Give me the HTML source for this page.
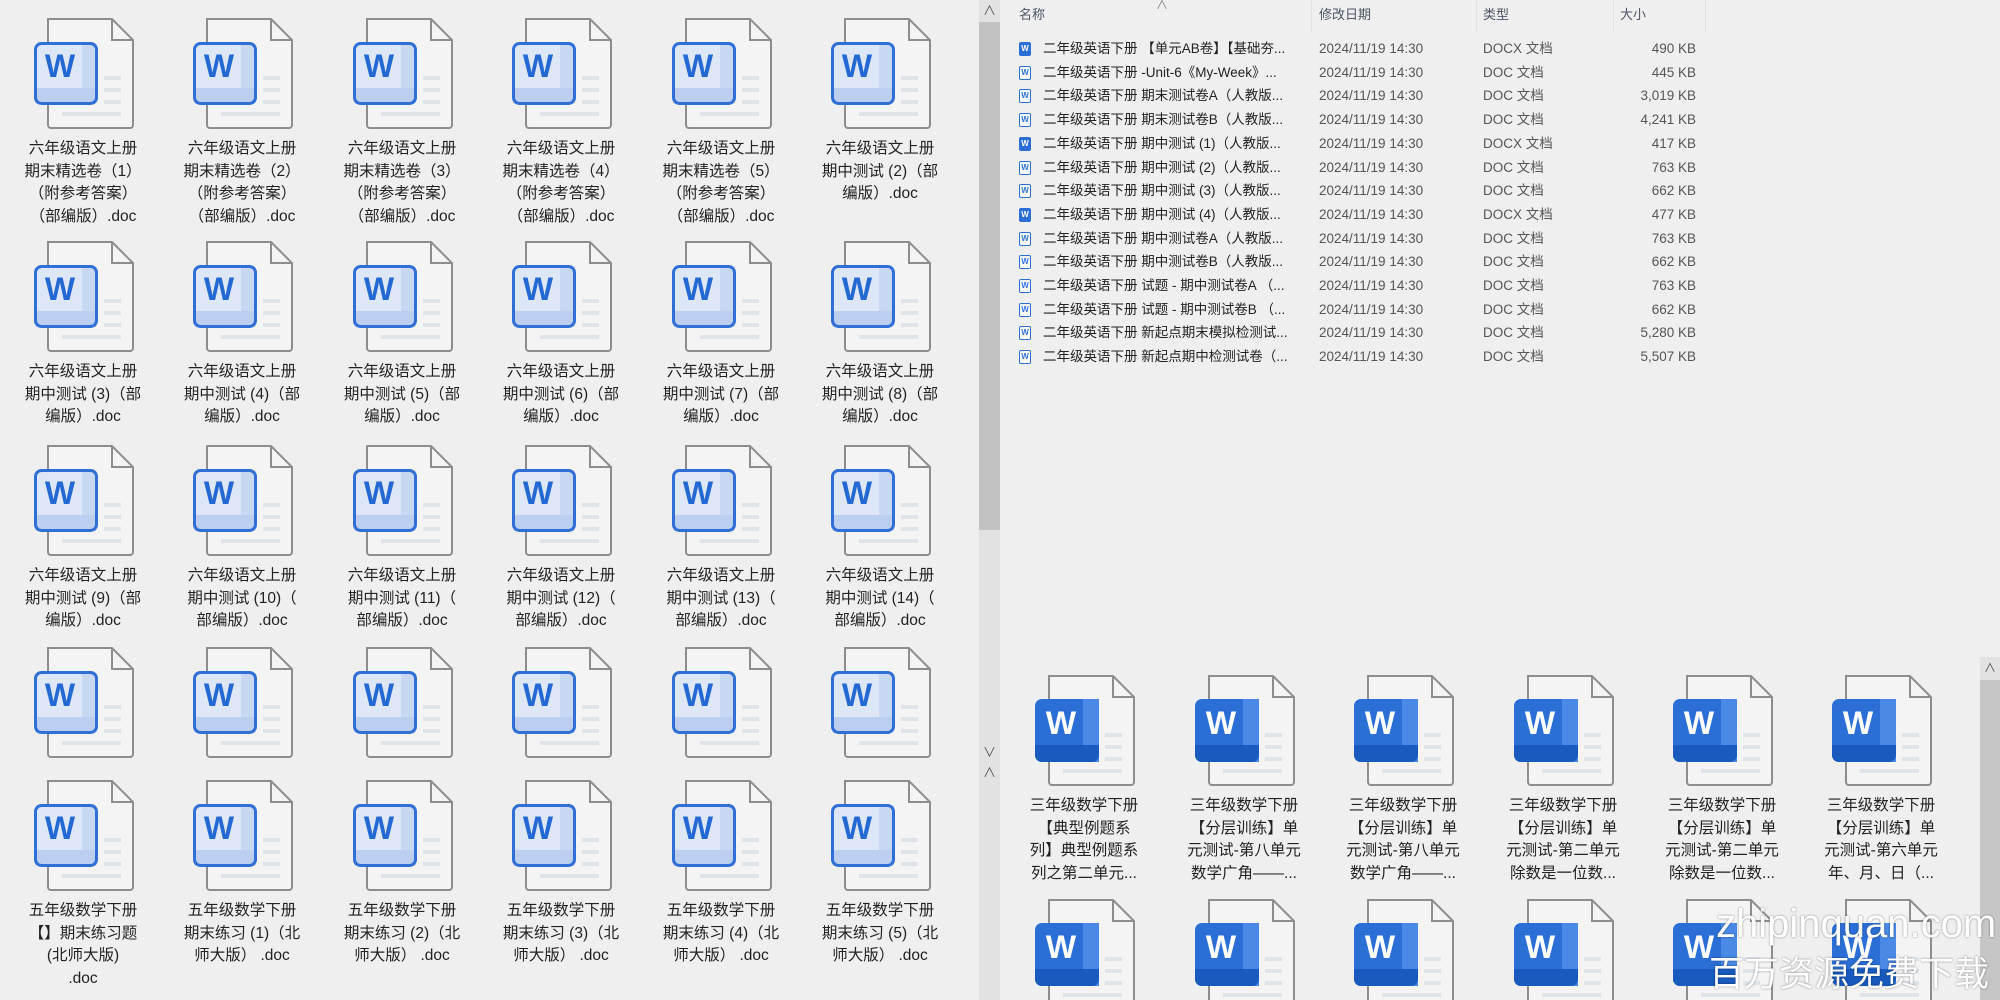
<!DOCTYPE html>
<html style="width:2000px;height:1000px;overflow:hidden"><head><meta charset="utf-8">
<style>
*{margin:0;padding:0;box-sizing:border-box}
body{width:2000px;height:1000px;overflow:hidden;background:#efefef;position:relative;font-family:"Liberation Sans","Noto Sans CJK SC",sans-serif;color:#1e1e1e}
.it{position:absolute;width:160px;height:100px}
.ic{position:absolute;left:31px;top:0;width:100px;height:112px}
.ic svg{position:absolute;left:0;top:0}
.ic b{position:absolute;left:0;top:30px;width:52px;height:40px;line-height:40px;text-align:center;font:bold 32px "Liberation Sans",sans-serif;color:#2469d3}
.dk b{color:#fff}
.tx{position:absolute;left:-10px;width:180px;top:120px;text-align:center;font-size:15.5px;line-height:22.5px;white-space:nowrap;color:#222}
.clip{height:112px;overflow:hidden}
.clipb{height:101px;overflow:hidden}
.row{position:absolute;left:1000px;height:24px;font-size:13.5px;line-height:24px;white-space:nowrap;color:#222}
.row span{position:absolute}
.g{color:#555}
.hd{position:absolute;top:4px;font-size:13px;color:#4d5566}
.sep{position:absolute;top:0;width:1px;height:32px;background:#e2e2e2}
.li{position:absolute;left:19px;top:5px;width:12px;height:14px;border:1.5px solid #2b6fd6;border-radius:2px;background:#fff;font:bold 8px "Liberation Sans",sans-serif;color:#2b6fd6;text-align:center;line-height:11px}
.li.f{background:#2b6fd6;color:#fff}
</style></head><body>
<svg width="0" height="0" style="position:absolute">
<defs>
<g id="pg"><path d="M14 1H78L99 22V107a3 3 0 0 1-3 3H17a3 3 0 0 1-3-3Z" fill="#f4f4f4" stroke="#8d8d8d" stroke-width="2"/><path d="M78 1V22H99" fill="none" stroke="#8d8d8d" stroke-width="2"/><rect x="70" y="58" width="17" height="4" fill="#dfe4eb"/><rect x="70" y="70" width="17" height="4" fill="#dfe4eb"/><rect x="70" y="82" width="17" height="4" fill="#dfe4eb"/><rect x="28" y="94" width="59" height="4" fill="#dfe4eb"/></g>
<g id="lt"><use href="#pg"/><rect x="1.5" y="25.5" width="61" height="60" rx="6" fill="#dde7f7"/><rect x="48" y="25.5" width="14.5" height="60" fill="#c8d8f2"/><rect x="1.5" y="70" width="61" height="15.5" fill="#bccff0"/><rect x="1.5" y="25.5" width="61" height="60" rx="6" fill="none" stroke="#2f6fd6" stroke-width="3"/></g>
<g id="dkk"><use href="#pg"/><rect x="0" y="24" width="64" height="63" rx="7" fill="#2b6fd6"/><rect x="48" y="24" width="16" height="63" rx="0" fill="#4a8ae6"/><rect x="0" y="70" width="64" height="17" rx="7" fill="#185abd"/><rect x="0" y="70" width="64" height="6" fill="#185abd"/></g>
</defs></svg>

<div style="position:absolute;left:979px;top:0;width:21px;height:1000px;background:#e2e2e2"></div>
<div style="position:absolute;left:979px;top:22px;width:21px;height:508px;background:#c2c2c2"></div>
<div style="position:absolute;left:983px;top:0;font-size:13px;color:#555">&#x2227;</div>
<div style="position:absolute;left:983px;top:742px;font-size:13px;color:#555">&#x2228;</div>
<div style="position:absolute;left:983px;top:762px;font-size:13px;color:#555">&#x2227;</div>

<div class="it" style="left:3px;top:18px"><div class="ic"><svg width="100" height="112"><use href="#lt"/></svg><b>W</b></div><div class="tx">六年级语文上册<br>期末精选卷（1）<br>（附参考答案）<br>（部编版）.doc</div></div>
<div class="it" style="left:162px;top:18px"><div class="ic"><svg width="100" height="112"><use href="#lt"/></svg><b>W</b></div><div class="tx">六年级语文上册<br>期末精选卷（2）<br>（附参考答案）<br>（部编版）.doc</div></div>
<div class="it" style="left:322px;top:18px"><div class="ic"><svg width="100" height="112"><use href="#lt"/></svg><b>W</b></div><div class="tx">六年级语文上册<br>期末精选卷（3）<br>（附参考答案）<br>（部编版）.doc</div></div>
<div class="it" style="left:481px;top:18px"><div class="ic"><svg width="100" height="112"><use href="#lt"/></svg><b>W</b></div><div class="tx">六年级语文上册<br>期末精选卷（4）<br>（附参考答案）<br>（部编版）.doc</div></div>
<div class="it" style="left:641px;top:18px"><div class="ic"><svg width="100" height="112"><use href="#lt"/></svg><b>W</b></div><div class="tx">六年级语文上册<br>期末精选卷（5）<br>（附参考答案）<br>（部编版）.doc</div></div>
<div class="it" style="left:800px;top:18px"><div class="ic"><svg width="100" height="112"><use href="#lt"/></svg><b>W</b></div><div class="tx">六年级语文上册<br>期中测试 (2)（部<br>编版）.doc</div></div>
<div class="it" style="left:3px;top:241px"><div class="ic"><svg width="100" height="112"><use href="#lt"/></svg><b>W</b></div><div class="tx">六年级语文上册<br>期中测试 (3)（部<br>编版）.doc</div></div>
<div class="it" style="left:162px;top:241px"><div class="ic"><svg width="100" height="112"><use href="#lt"/></svg><b>W</b></div><div class="tx">六年级语文上册<br>期中测试 (4)（部<br>编版）.doc</div></div>
<div class="it" style="left:322px;top:241px"><div class="ic"><svg width="100" height="112"><use href="#lt"/></svg><b>W</b></div><div class="tx">六年级语文上册<br>期中测试 (5)（部<br>编版）.doc</div></div>
<div class="it" style="left:481px;top:241px"><div class="ic"><svg width="100" height="112"><use href="#lt"/></svg><b>W</b></div><div class="tx">六年级语文上册<br>期中测试 (6)（部<br>编版）.doc</div></div>
<div class="it" style="left:641px;top:241px"><div class="ic"><svg width="100" height="112"><use href="#lt"/></svg><b>W</b></div><div class="tx">六年级语文上册<br>期中测试 (7)（部<br>编版）.doc</div></div>
<div class="it" style="left:800px;top:241px"><div class="ic"><svg width="100" height="112"><use href="#lt"/></svg><b>W</b></div><div class="tx">六年级语文上册<br>期中测试 (8)（部<br>编版）.doc</div></div>
<div class="it" style="left:3px;top:445px"><div class="ic"><svg width="100" height="112"><use href="#lt"/></svg><b>W</b></div><div class="tx">六年级语文上册<br>期中测试 (9)（部<br>编版）.doc</div></div>
<div class="it" style="left:162px;top:445px"><div class="ic"><svg width="100" height="112"><use href="#lt"/></svg><b>W</b></div><div class="tx">六年级语文上册<br>期中测试 (10)（<br>部编版）.doc</div></div>
<div class="it" style="left:322px;top:445px"><div class="ic"><svg width="100" height="112"><use href="#lt"/></svg><b>W</b></div><div class="tx">六年级语文上册<br>期中测试 (11)（<br>部编版）.doc</div></div>
<div class="it" style="left:481px;top:445px"><div class="ic"><svg width="100" height="112"><use href="#lt"/></svg><b>W</b></div><div class="tx">六年级语文上册<br>期中测试 (12)（<br>部编版）.doc</div></div>
<div class="it" style="left:641px;top:445px"><div class="ic"><svg width="100" height="112"><use href="#lt"/></svg><b>W</b></div><div class="tx">六年级语文上册<br>期中测试 (13)（<br>部编版）.doc</div></div>
<div class="it" style="left:800px;top:445px"><div class="ic"><svg width="100" height="112"><use href="#lt"/></svg><b>W</b></div><div class="tx">六年级语文上册<br>期中测试 (14)（<br>部编版）.doc</div></div>
<div class="it clip" style="left:3px;top:647px"><div class="ic"><svg width="100" height="112"><use href="#lt"/></svg><b>W</b></div></div>
<div class="it clip" style="left:162px;top:647px"><div class="ic"><svg width="100" height="112"><use href="#lt"/></svg><b>W</b></div></div>
<div class="it clip" style="left:322px;top:647px"><div class="ic"><svg width="100" height="112"><use href="#lt"/></svg><b>W</b></div></div>
<div class="it clip" style="left:481px;top:647px"><div class="ic"><svg width="100" height="112"><use href="#lt"/></svg><b>W</b></div></div>
<div class="it clip" style="left:641px;top:647px"><div class="ic"><svg width="100" height="112"><use href="#lt"/></svg><b>W</b></div></div>
<div class="it clip" style="left:800px;top:647px"><div class="ic"><svg width="100" height="112"><use href="#lt"/></svg><b>W</b></div></div>
<div class="it" style="left:3px;top:780px"><div class="ic"><svg width="100" height="112"><use href="#lt"/></svg><b>W</b></div><div class="tx">五年级数学下册<br>【】期末练习题<br>(北师大版)<br>.doc</div></div>
<div class="it" style="left:162px;top:780px"><div class="ic"><svg width="100" height="112"><use href="#lt"/></svg><b>W</b></div><div class="tx">五年级数学下册<br>期末练习 (1)（北<br>师大版） .doc</div></div>
<div class="it" style="left:322px;top:780px"><div class="ic"><svg width="100" height="112"><use href="#lt"/></svg><b>W</b></div><div class="tx">五年级数学下册<br>期末练习 (2)（北<br>师大版） .doc</div></div>
<div class="it" style="left:481px;top:780px"><div class="ic"><svg width="100" height="112"><use href="#lt"/></svg><b>W</b></div><div class="tx">五年级数学下册<br>期末练习 (3)（北<br>师大版） .doc</div></div>
<div class="it" style="left:641px;top:780px"><div class="ic"><svg width="100" height="112"><use href="#lt"/></svg><b>W</b></div><div class="tx">五年级数学下册<br>期末练习 (4)（北<br>师大版） .doc</div></div>
<div class="it" style="left:800px;top:780px"><div class="ic"><svg width="100" height="112"><use href="#lt"/></svg><b>W</b></div><div class="tx">五年级数学下册<br>期末练习 (5)（北<br>师大版） .doc</div></div>

<div class="hd" style="left:1019px">名称</div>
<div class="hd" style="left:1156px;top:-4px;font-size:12px;color:#888">&#x2227;</div>
<div class="hd" style="left:1319px">修改日期</div>
<div class="hd" style="left:1483px">类型</div>
<div class="hd" style="left:1620px">大小</div>
<div class="sep" style="left:1311px"></div><div class="sep" style="left:1476px"></div><div class="sep" style="left:1613px"></div><div class="sep" style="left:1705px"></div>

<div class="row" style="top:37px"><span class="li f">W</span><span style="left:43px">二年级英语下册 【单元AB卷】【基础夯...</span><span class="g" style="left:319px">2024/11/19 14:30</span><span class="g" style="left:483px">DOCX 文档</span><span class="g" style="left:600px;width:96px;text-align:right">490 KB</span></div>
<div class="row" style="top:61px"><span class="li">W</span><span style="left:43px">二年级英语下册 -Unit-6《My-Week》...</span><span class="g" style="left:319px">2024/11/19 14:30</span><span class="g" style="left:483px">DOC 文档</span><span class="g" style="left:600px;width:96px;text-align:right">445 KB</span></div>
<div class="row" style="top:84px"><span class="li">W</span><span style="left:43px">二年级英语下册 期末测试卷A（人教版...</span><span class="g" style="left:319px">2024/11/19 14:30</span><span class="g" style="left:483px">DOC 文档</span><span class="g" style="left:600px;width:96px;text-align:right">3,019 KB</span></div>
<div class="row" style="top:108px"><span class="li">W</span><span style="left:43px">二年级英语下册 期末测试卷B（人教版...</span><span class="g" style="left:319px">2024/11/19 14:30</span><span class="g" style="left:483px">DOC 文档</span><span class="g" style="left:600px;width:96px;text-align:right">4,241 KB</span></div>
<div class="row" style="top:132px"><span class="li f">W</span><span style="left:43px">二年级英语下册 期中测试 (1)（人教版...</span><span class="g" style="left:319px">2024/11/19 14:30</span><span class="g" style="left:483px">DOCX 文档</span><span class="g" style="left:600px;width:96px;text-align:right">417 KB</span></div>
<div class="row" style="top:156px"><span class="li">W</span><span style="left:43px">二年级英语下册 期中测试 (2)（人教版...</span><span class="g" style="left:319px">2024/11/19 14:30</span><span class="g" style="left:483px">DOC 文档</span><span class="g" style="left:600px;width:96px;text-align:right">763 KB</span></div>
<div class="row" style="top:179px"><span class="li">W</span><span style="left:43px">二年级英语下册 期中测试 (3)（人教版...</span><span class="g" style="left:319px">2024/11/19 14:30</span><span class="g" style="left:483px">DOC 文档</span><span class="g" style="left:600px;width:96px;text-align:right">662 KB</span></div>
<div class="row" style="top:203px"><span class="li f">W</span><span style="left:43px">二年级英语下册 期中测试 (4)（人教版...</span><span class="g" style="left:319px">2024/11/19 14:30</span><span class="g" style="left:483px">DOCX 文档</span><span class="g" style="left:600px;width:96px;text-align:right">477 KB</span></div>
<div class="row" style="top:227px"><span class="li">W</span><span style="left:43px">二年级英语下册 期中测试卷A（人教版...</span><span class="g" style="left:319px">2024/11/19 14:30</span><span class="g" style="left:483px">DOC 文档</span><span class="g" style="left:600px;width:96px;text-align:right">763 KB</span></div>
<div class="row" style="top:250px"><span class="li">W</span><span style="left:43px">二年级英语下册 期中测试卷B（人教版...</span><span class="g" style="left:319px">2024/11/19 14:30</span><span class="g" style="left:483px">DOC 文档</span><span class="g" style="left:600px;width:96px;text-align:right">662 KB</span></div>
<div class="row" style="top:274px"><span class="li">W</span><span style="left:43px">二年级英语下册 试题 - 期中测试卷A （...</span><span class="g" style="left:319px">2024/11/19 14:30</span><span class="g" style="left:483px">DOC 文档</span><span class="g" style="left:600px;width:96px;text-align:right">763 KB</span></div>
<div class="row" style="top:298px"><span class="li">W</span><span style="left:43px">二年级英语下册 试题 - 期中测试卷B （...</span><span class="g" style="left:319px">2024/11/19 14:30</span><span class="g" style="left:483px">DOC 文档</span><span class="g" style="left:600px;width:96px;text-align:right">662 KB</span></div>
<div class="row" style="top:321px"><span class="li">W</span><span style="left:43px">二年级英语下册 新起点期末模拟检测试...</span><span class="g" style="left:319px">2024/11/19 14:30</span><span class="g" style="left:483px">DOC 文档</span><span class="g" style="left:600px;width:96px;text-align:right">5,280 KB</span></div>
<div class="row" style="top:345px"><span class="li">W</span><span style="left:43px">二年级英语下册 新起点期中检测试卷（...</span><span class="g" style="left:319px">2024/11/19 14:30</span><span class="g" style="left:483px">DOC 文档</span><span class="g" style="left:600px;width:96px;text-align:right">5,507 KB</span></div>

<div style="position:absolute;left:1980px;top:657px;width:20px;height:343px;background:#e2e2e2"></div>
<div style="position:absolute;left:1980px;top:680px;width:20px;height:320px;background:#c6c6c6"></div>
<div style="position:absolute;left:1984px;top:659px;font-size:12px;color:#555">&#x2227;</div>

<div class="it" style="left:1004px;top:675px"><div class="ic dk"><svg width="100" height="112"><use href="#dkk"/></svg><b>W</b></div><div class="tx">三年级数学下册<br>【典型例题系<br>列】典型例题系<br>列之第二单元...</div></div>
<div class="it" style="left:1164px;top:675px"><div class="ic dk"><svg width="100" height="112"><use href="#dkk"/></svg><b>W</b></div><div class="tx">三年级数学下册<br>【分层训练】单<br>元测试-第八单元<br>数学广角——...</div></div>
<div class="it" style="left:1323px;top:675px"><div class="ic dk"><svg width="100" height="112"><use href="#dkk"/></svg><b>W</b></div><div class="tx">三年级数学下册<br>【分层训练】单<br>元测试-第八单元<br>数学广角——...</div></div>
<div class="it" style="left:1483px;top:675px"><div class="ic dk"><svg width="100" height="112"><use href="#dkk"/></svg><b>W</b></div><div class="tx">三年级数学下册<br>【分层训练】单<br>元测试-第二单元<br>除数是一位数...</div></div>
<div class="it" style="left:1642px;top:675px"><div class="ic dk"><svg width="100" height="112"><use href="#dkk"/></svg><b>W</b></div><div class="tx">三年级数学下册<br>【分层训练】单<br>元测试-第二单元<br>除数是一位数...</div></div>
<div class="it" style="left:1801px;top:675px"><div class="ic dk"><svg width="100" height="112"><use href="#dkk"/></svg><b>W</b></div><div class="tx">三年级数学下册<br>【分层训练】单<br>元测试-第六单元<br>年、月、日（...</div></div>
<div class="it clipb" style="left:1004px;top:899px"><div class="ic dk"><svg width="100" height="112"><use href="#dkk"/></svg><b>W</b></div></div>
<div class="it clipb" style="left:1164px;top:899px"><div class="ic dk"><svg width="100" height="112"><use href="#dkk"/></svg><b>W</b></div></div>
<div class="it clipb" style="left:1323px;top:899px"><div class="ic dk"><svg width="100" height="112"><use href="#dkk"/></svg><b>W</b></div></div>
<div class="it clipb" style="left:1483px;top:899px"><div class="ic dk"><svg width="100" height="112"><use href="#dkk"/></svg><b>W</b></div></div>
<div class="it clipb" style="left:1642px;top:899px"><div class="ic dk"><svg width="100" height="112"><use href="#dkk"/></svg><b>W</b></div></div>
<div class="it clipb" style="left:1801px;top:899px"><div class="ic dk"><svg width="100" height="112"><use href="#dkk"/></svg><b>W</b></div></div>

<div style="position:absolute;left:1716px;top:900px;font-size:40px;line-height:48px;color:#fff;text-shadow:0 0 2px rgba(0,0,0,.45);white-space:nowrap">zhipinquan.com</div>
<div style="position:absolute;left:1709px;top:950px;font-size:35px;line-height:44px;color:#fff;text-shadow:0 0 2px rgba(0,0,0,.45);white-space:nowrap;font-family:'Noto Sans CJK SC',sans-serif">百万资源免费下载</div>
</body></html>
